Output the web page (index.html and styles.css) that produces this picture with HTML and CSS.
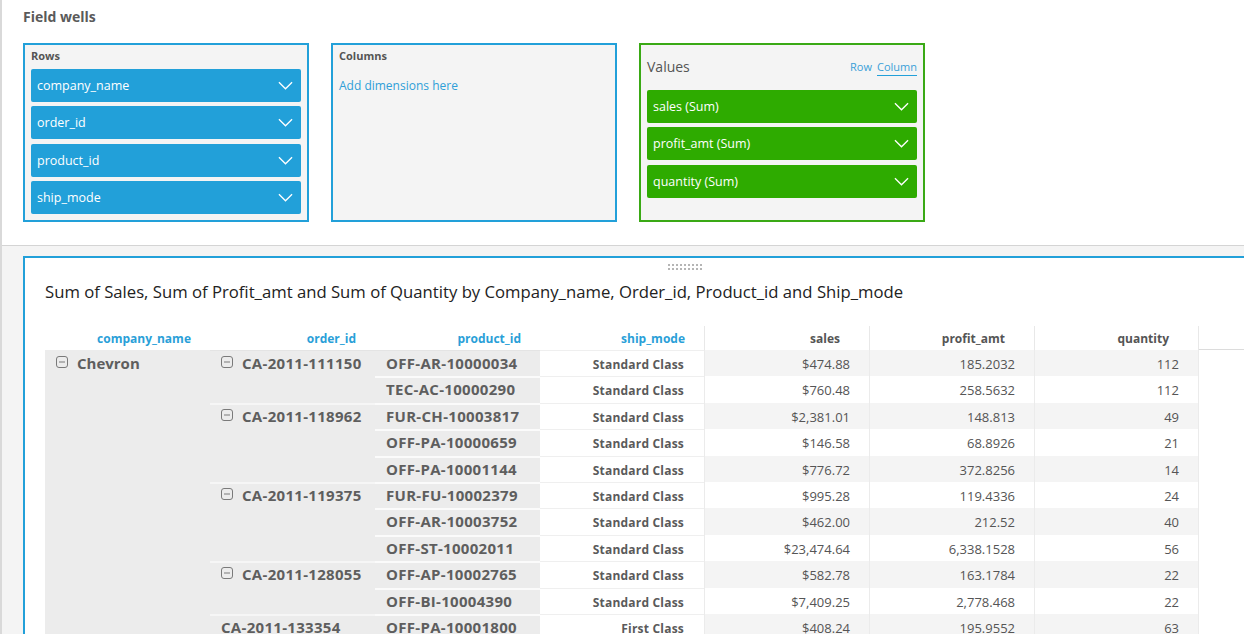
FILE: index.html
```html
<!DOCTYPE html>
<html lang="en">
<head>
<meta charset="utf-8">
<title>Field wells</title>
<link rel="stylesheet" href="styles.css">
</head>
<body>
<div class="app">
  <section class="wells-area">
    <h2 class="wells-title">Field wells</h2>
    <div class="wells">
      <div class="well well-blue">
        <div class="well-label">Rows</div>
        <div class="pills">
          <div class="pill pill-blue"><span>company_name</span><svg class="chev" viewBox="0 0 16 9"><polyline points="1,1 8,8 15,1"/></svg></div>
          <div class="pill pill-blue"><span>order_id</span><svg class="chev" viewBox="0 0 16 9"><polyline points="1,1 8,8 15,1"/></svg></div>
          <div class="pill pill-blue"><span>product_id</span><svg class="chev" viewBox="0 0 16 9"><polyline points="1,1 8,8 15,1"/></svg></div>
          <div class="pill pill-blue"><span>ship_mode</span><svg class="chev" viewBox="0 0 16 9"><polyline points="1,1 8,8 15,1"/></svg></div>
        </div>
      </div>
      <div class="well well-blue">
        <div class="well-label">Columns</div>
        <div class="add-dim">Add dimensions here</div>
      </div>
      <div class="well well-green">
        <div class="values-head">
          <span class="values-title">Values</span>
          <div class="toggle"><span class="tog">Row</span><span class="tog tog-active">Column</span></div>
        </div>
        <div class="pills">
          <div class="pill pill-green"><span>sales (Sum)</span><svg class="chev" viewBox="0 0 16 9"><polyline points="1,1 8,8 15,1"/></svg></div>
          <div class="pill pill-green"><span>profit_amt (Sum)</span><svg class="chev" viewBox="0 0 16 9"><polyline points="1,1 8,8 15,1"/></svg></div>
          <div class="pill pill-green"><span>quantity (Sum)</span><svg class="chev" viewBox="0 0 16 9"><polyline points="1,1 8,8 15,1"/></svg></div>
        </div>
      </div>
    </div>
  </section>

  <section class="canvas">
    <div class="visual">
      <div class="handle">
        <svg width="34" height="6" viewBox="0 0 34 6">
          <g fill="#b5b5b5">
            <rect x="0" y="0" width="2" height="2"/><rect x="4" y="0" width="2" height="2"/><rect x="8" y="0" width="2" height="2"/><rect x="12" y="0" width="2" height="2"/><rect x="16" y="0" width="2" height="2"/><rect x="20" y="0" width="2" height="2"/><rect x="24" y="0" width="2" height="2"/><rect x="28" y="0" width="2" height="2"/><rect x="32" y="0" width="2" height="2"/>
            <rect x="0" y="4" width="2" height="2"/><rect x="4" y="4" width="2" height="2"/><rect x="8" y="4" width="2" height="2"/><rect x="12" y="4" width="2" height="2"/><rect x="16" y="4" width="2" height="2"/><rect x="20" y="4" width="2" height="2"/><rect x="24" y="4" width="2" height="2"/><rect x="28" y="4" width="2" height="2"/><rect x="32" y="4" width="2" height="2"/>
          </g>
        </svg>
      </div>
      <h1 class="visual-title">Sum of Sales, Sum of Profit_amt and Sum of Quantity by Company_name, Order_id, Product_id and Ship_mode</h1>

      <div class="pivot">
        <div class="ph col-company">company_name</div>
        <div class="ph col-order">order_id</div>
        <div class="ph col-product">product_id</div>
        <div class="ph col-ship">ship_mode</div>
        <div class="ph ph-val col-sales">sales</div>
        <div class="ph ph-val col-profit">profit_amt</div>
        <div class="ph ph-val ph-last col-qty">quantity</div>
        <div class="ph ph-fill col-fill"></div>

        <!-- row 1 -->
        <div class="cell rh-cell b-company col-company span11"><div class="rh"><svg class="minus" viewBox="0 0 12 12"><rect x="0.5" y="0.5" width="11" height="11" rx="2.5"/><line x1="3" y1="6" x2="9" y2="6"/></svg><span>Chevron</span></div></div>
        <div class="cell rh-cell b-order col-order span2 first"><div class="rh"><svg class="minus" viewBox="0 0 12 12"><rect x="0.5" y="0.5" width="11" height="11" rx="2.5"/><line x1="3" y1="6" x2="9" y2="6"/></svg><span>CA-2011-111150</span></div></div>
        <div class="cell rh-cell b-product col-product first"><div class="rh">OFF-AR-10000034</div></div>
        <div class="cell b-ship col-ship first">Standard Class</div>
        <div class="cell val col-sales alt">$474.88</div>
        <div class="cell val col-profit alt">185.2032</div>
        <div class="cell val col-qty alt">112</div>

        <!-- row 2 -->
        <div class="cell rh-cell b-product col-product"><div class="rh">TEC-AC-10000290</div></div>
        <div class="cell b-ship col-ship">Standard Class</div>
        <div class="cell val col-sales">$760.48</div>
        <div class="cell val col-profit">258.5632</div>
        <div class="cell val col-qty">112</div>

        <!-- row 3 -->
        <div class="cell rh-cell b-order col-order span3"><div class="rh"><svg class="minus" viewBox="0 0 12 12"><rect x="0.5" y="0.5" width="11" height="11" rx="2.5"/><line x1="3" y1="6" x2="9" y2="6"/></svg><span>CA-2011-118962</span></div></div>
        <div class="cell rh-cell b-product col-product"><div class="rh">FUR-CH-10003817</div></div>
        <div class="cell b-ship col-ship">Standard Class</div>
        <div class="cell val col-sales alt">$2,381.01</div>
        <div class="cell val col-profit alt">148.813</div>
        <div class="cell val col-qty alt">49</div>

        <!-- row 4 -->
        <div class="cell rh-cell b-product col-product"><div class="rh">OFF-PA-10000659</div></div>
        <div class="cell b-ship col-ship">Standard Class</div>
        <div class="cell val col-sales">$146.58</div>
        <div class="cell val col-profit">68.8926</div>
        <div class="cell val col-qty">21</div>

        <!-- row 5 -->
        <div class="cell rh-cell b-product col-product"><div class="rh">OFF-PA-10001144</div></div>
        <div class="cell b-ship col-ship">Standard Class</div>
        <div class="cell val col-sales alt">$776.72</div>
        <div class="cell val col-profit alt">372.8256</div>
        <div class="cell val col-qty alt">14</div>

        <!-- row 6 -->
        <div class="cell rh-cell b-order col-order span3"><div class="rh"><svg class="minus" viewBox="0 0 12 12"><rect x="0.5" y="0.5" width="11" height="11" rx="2.5"/><line x1="3" y1="6" x2="9" y2="6"/></svg><span>CA-2011-119375</span></div></div>
        <div class="cell rh-cell b-product col-product"><div class="rh">FUR-FU-10002379</div></div>
        <div class="cell b-ship col-ship">Standard Class</div>
        <div class="cell val col-sales">$995.28</div>
        <div class="cell val col-profit">119.4336</div>
        <div class="cell val col-qty">24</div>

        <!-- row 7 -->
        <div class="cell rh-cell b-product col-product"><div class="rh">OFF-AR-10003752</div></div>
        <div class="cell b-ship col-ship">Standard Class</div>
        <div class="cell val col-sales alt">$462.00</div>
        <div class="cell val col-profit alt">212.52</div>
        <div class="cell val col-qty alt">40</div>

        <!-- row 8 -->
        <div class="cell rh-cell b-product col-product"><div class="rh">OFF-ST-10002011</div></div>
        <div class="cell b-ship col-ship">Standard Class</div>
        <div class="cell val col-sales">$23,474.64</div>
        <div class="cell val col-profit">6,338.1528</div>
        <div class="cell val col-qty">56</div>

        <!-- row 9 -->
        <div class="cell rh-cell b-order col-order span2"><div class="rh"><svg class="minus" viewBox="0 0 12 12"><rect x="0.5" y="0.5" width="11" height="11" rx="2.5"/><line x1="3" y1="6" x2="9" y2="6"/></svg><span>CA-2011-128055</span></div></div>
        <div class="cell rh-cell b-product col-product"><div class="rh">OFF-AP-10002765</div></div>
        <div class="cell b-ship col-ship">Standard Class</div>
        <div class="cell val col-sales alt">$582.78</div>
        <div class="cell val col-profit alt">163.1784</div>
        <div class="cell val col-qty alt">22</div>

        <!-- row 10 -->
        <div class="cell rh-cell b-product col-product"><div class="rh">OFF-BI-10004390</div></div>
        <div class="cell b-ship col-ship">Standard Class</div>
        <div class="cell val col-sales">$7,409.25</div>
        <div class="cell val col-profit">2,778.468</div>
        <div class="cell val col-qty">22</div>

        <!-- row 11 -->
        <div class="cell rh-cell b-order col-order"><div class="rh"><span>CA-2011-133354</span></div></div>
        <div class="cell rh-cell b-product col-product"><div class="rh">OFF-PA-10001800</div></div>
        <div class="cell b-ship col-ship">First Class</div>
        <div class="cell val col-sales alt">$408.24</div>
        <div class="cell val col-profit alt">195.9552</div>
        <div class="cell val col-qty alt">63</div>
      </div>
    </div>
  </section>
</div>
</body>
</html>
```

FILE: styles.css
```css
html, body {
  margin: 0;
  padding: 0;
  height: 634px;
  overflow: hidden;
}

body {
  font-family: "Open Sans", "Noto Sans", "Liberation Sans", sans-serif;
  background: #ffffff;
  color: #555555;
}

.app {
  height: 634px;
  border-left: 2px solid #d9d9d9;
  box-sizing: border-box;
  overflow: hidden;
}

/* ---------- Field wells ---------- */
.wells-area {
  height: 246px;
  box-sizing: border-box;
  border-bottom: 1px solid #d4d4d4;
  padding: 8px 0 0 21px;
  background: #ffffff;
}

.wells-title {
  margin: 0;
  font-size: 14px;
  line-height: 18px;
  font-weight: 700;
  color: #5a5a5a;
}

.wells {
  display: flex;
  gap: 22px;
  margin-top: 17px;
}

.well {
  width: 286px;
  height: 179px;
  box-sizing: border-box;
  background: #f4f4f4;
  padding: 4px 6px 0 6px;
}

.well-blue {
  border: 2px solid #22a0d9;
}

.well-green {
  border: 2px solid #3aa915;
  padding-top: 0;
}

.well-label {
  font-size: 11px;
  line-height: 14px;
  font-weight: 700;
  color: #555555;
  margin-bottom: 6px;
}

.pills {
  display: flex;
  flex-direction: column;
  gap: 4.3px;
}

.pill {
  height: 33px;
  display: flex;
  align-items: center;
  justify-content: space-between;
  padding: 0 8px 0 6px;
  border-radius: 2px;
  color: #ffffff;
  font-size: 12.5px;
}

.pill-blue {
  background: #22a0d9;
}

.pill-green {
  background: #2eab00;
}

.chev {
  width: 15px;
  height: 9px;
  fill: none;
  stroke: #ffffff;
  stroke-width: 1.4;
}

.add-dim {
  margin-top: 14px;
  font-size: 12px;
  line-height: 18px;
  color: #2f9fd8;
}

.values-head {
  height: 45px;
  display: flex;
  align-items: center;
  justify-content: space-between;
}

.values-title {
  font-size: 14px;
  line-height: 20px;
  color: #555555;
  margin-top: -2px;
}

.toggle {
  display: flex;
  gap: 5px;
  font-size: 11px;
  line-height: 14px;
  color: #3aa0d8;
  margin-top: 0;
}

.tog-active {
  border-bottom: 1.5px solid #22a0d9;
  padding-bottom: 1px;
}

/* ---------- Canvas / visual ---------- */
.canvas {
  background: #f4f4f4;
  padding: 10px 0 0 21px;
  height: 388px;
  box-sizing: border-box;
}

.visual {
  width: 1302px;
  box-sizing: border-box;
  background: #ffffff;
  border-top: 2px solid #22a0d9;
  border-left: 2px solid #22a0d9;
  padding: 6px 0 0 20px;
  height: 400px;
}

.handle {
  display: flex;
  justify-content: center;
  height: 6px;
}

.handle svg {
  display: block;
}

.visual-title {
  margin: 10px 0 0 0;
  font-size: 16.7px;
  line-height: 24px;
  font-weight: 400;
  color: #222222;
}

/* ---------- Pivot table ---------- */
.pivot {
  margin-top: 22px;
  display: grid;
  grid-template-columns: 165px 165px 165px 164px 165px 165px 165px 1fr;
  grid-template-rows: 24px repeat(11, 26.4px);
}

.col-company { grid-column: 1; }
.col-order { grid-column: 2; }
.col-product { grid-column: 3; }
.col-ship { grid-column: 4; }
.col-sales { grid-column: 5; }
.col-profit { grid-column: 6; }
.col-qty { grid-column: 7; }
.col-fill { grid-column: 8; }

.span2 { grid-row: span 2; }
.span3 { grid-row: span 3; }
.span11 { grid-row: span 11; }

.ph {
  font-size: 12px;
  font-weight: 700;
  line-height: 24px;
  padding-top: 1px;
  text-align: right;
  padding-right: 19px;
  color: #2a9fd8;
  box-sizing: border-box;
}

.ph-val {
  color: #555555;
  padding-right: 29px;
  border-left: 1px solid #e8e8e8;
  background: #ffffff;
}

.ph-last {
  border-right: 1px solid #e8e8e8;
}

.ph-fill {
  border-bottom: 1px solid #dcdcdc;
  padding: 0;
}

.cell {
  box-sizing: border-box;
  line-height: 26.4px;
  white-space: nowrap;
}

.rh-cell {
  background: #ececec;
  padding-left: 11px;
  font-size: 15px;
  font-weight: 700;
  letter-spacing: 0.3px;
  color: #5e5e5e;
}

.rh {
  height: 26.4px;
  display: flex;
  align-items: center;
  gap: 9px;
}

.b-company .rh {
  letter-spacing: 0;
}

.minus {
  width: 12px;
  height: 12px;
  flex: none;
  fill: none;
  stroke: #7a7a7a;
  stroke-width: 1;
  margin-top: -2px;
}

.b-order {
  box-shadow: inset 0 2px 0 #f6f6f6;
}

.b-product {
  box-shadow: inset 0 2px 0 #fbfbfb;
}

.b-order.first,
.b-product.first {
  box-shadow: inset 0 1px 0 #e4e4e4;
}

.b-ship {
  background: #ffffff;
  box-shadow: inset 0 1px 0 #efefef;
  text-align: right;
  padding-right: 20px;
  padding-top: 2px;
  font-size: 12px;
  font-weight: 700;
  letter-spacing: 0.2px;
  color: #5a5a5a;
}

.val {
  text-align: right;
  padding-right: 19px;
  padding-top: 1px;
  font-size: 13px;
  color: #555555;
  background: #ffffff;
  border-left: 1px solid #ebebeb;
}

.val.col-qty {
  border-right: 1px solid #ebebeb;
}

.val.alt {
  background: #f4f4f4;
}
```
